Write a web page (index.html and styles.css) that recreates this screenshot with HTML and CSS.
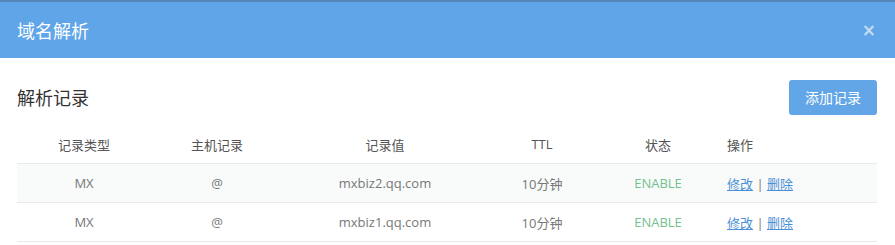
FILE: index.html
```html
<!DOCTYPE html>
<html lang="zh-CN">
<head>
<meta charset="utf-8">
<title>域名解析</title>
<link rel="stylesheet" href="styles.css">
</head>
<body>
<div class="modal">
  <div class="modal-header">
    <h1 class="modal-title">域名解析</h1>
    <span class="close">×</span>
  </div>
  <div class="modal-body">
    <div class="toolbar">
      <h2 class="section-title">解析记录</h2>
      <button class="btn-add">添加记录</button>
    </div>
    <table class="records">
      <colgroup>
        <col class="c1"><col class="c2"><col class="c3"><col class="c4"><col class="c5"><col class="c6">
      </colgroup>
      <thead>
        <tr><th>记录类型</th><th>主机记录</th><th>记录值</th><th>TTL</th><th>状态</th><th class="left">操作</th></tr>
      </thead>
      <tbody>
        <tr class="odd"><td>MX</td><td>@</td><td>mxbiz2.qq.com</td><td>10分钟</td><td class="ok">ENABLE</td><td class="left"><a href="#">修改</a> | <a href="#">删除</a></td></tr>
        <tr><td>MX</td><td>@</td><td>mxbiz1.qq.com</td><td>10分钟</td><td class="ok">ENABLE</td><td class="left"><a href="#">修改</a> | <a href="#">删除</a></td></tr>
      </tbody>
    </table>
  </div>
</div>
</body>
</html>
```
FILE: styles.css
```css
html, body {
  margin: 0;
  padding: 0;
  background: #ffffff;
  font-family: "Open Sans", "Noto Sans CJK SC", sans-serif;
}
.modal {
  width: 895px;
}
.modal-header {
  height: 56px;
  background: #5fa5e7;
  border-top: 2px solid #5586b8;
  display: flex;
  align-items: center;
  justify-content: space-between;
  padding: 0 19px 0 17px;
}
.modal-title {
  margin: 0;
  font-size: 18px;
  font-weight: normal;
  color: #ffffff;
}
.close {
  color: #c4dcf4;
  font-size: 17px;
  font-weight: bold;
  line-height: 1;
  font-family: "DejaVu Sans", sans-serif;
}
.modal-body {
  padding: 21px 18px 0 17px;
}
.toolbar {
  display: flex;
  align-items: center;
  justify-content: space-between;
  height: 36px;
}
.section-title {
  margin: 0;
  font-size: 18px;
  font-weight: normal;
  color: #333333;
}
.btn-add {
  width: 88px;
  height: 35px;
  border: none;
  border-radius: 3px;
  background: #62a6e8;
  color: #ffffff;
  font-family: inherit;
  font-size: 14px;
  padding: 0;
}
.records {
  width: 860px;
  border-collapse: collapse;
  margin-top: 10px;
  font-size: 13px;
}
.c1 { width: 134px; }
.c2 { width: 132px; }
.c3 { width: 204px; }
.c4 { width: 110px; }
.c5 { width: 122px; }
.c6 { width: 158px; }
.records th {
  font-weight: normal;
  color: #555555;
  height: 38px;
  text-align: center;
  border-bottom: 1px solid #e6ebe8;
  padding: 0;
}
.records td {
  color: #777777;
  height: 38px;
  text-align: center;
  border-bottom: 1px solid #e6ebe8;
  padding: 0;
}
.records .left {
  text-align: left;
  padding-left: 8px;
}
.records tr.odd td {
  background: #f9fbfa;
}
.records td.ok {
  color: #72c08f;
}
.records a {
  color: #4b8fd6;
  text-decoration: underline;
}
```
